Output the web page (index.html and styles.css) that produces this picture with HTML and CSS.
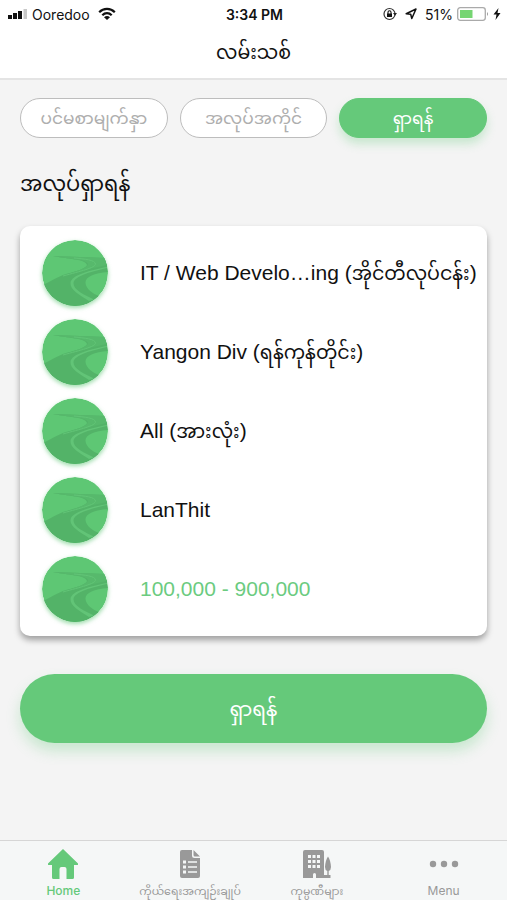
FILE: index.html
```html
<!DOCTYPE html>
<html lang="my">
<head>
<meta charset="utf-8">
<meta name="viewport" content="width=device-width, initial-scale=1">
<title>လမ်းသစ်</title>
<link rel="stylesheet" href="styles.css">
</head>
<body>
<svg class="defs" aria-hidden="true">
  <symbol id="road" viewBox="0 0 66 66">
    <circle cx="33" cy="33" r="33" fill="#5ec774"/>
    <path d="M11 16C28 17 48 17 62.500 18A33 33 0 0 1 66 32C52 33 43 37 43.500 43C44 49 51 54 57 56A33 33 0 0 1 2 44.500C9 41 14 38 21 35C31 32 44 29 45 25C44 19 25 19 11 16Z" fill="#53b368"/>
    <path d="M11 16C28 17 48 17 62.500 18L65 25C52 28 38 30 21 36C34 31 46 28 46 24C44 19 25 19 11 16Z" fill="#57b96c"/>
    <path d="M32 18C43 19 53 20 53.500 24C53 28 39 31 21 36" fill="none" stroke="#62c477" stroke-width="1"/>
    <path d="M65 27C49 30 29 35 28.500 43C28 50 38 55 47 61L52 59.500C43 55 31 50 31.500 43C32 36 51 31 65 28Z" fill="#62c477"/>
  </symbol>
</svg>
<div class="app">
  <header class="header">
    <div class="status">
      <div class="status-left">
        <svg width="20" height="12" viewBox="0 0 20 12"><path d="M0 7h4v4H0zM5 5h4v6H5zM10 3h4v8h-4zM15 1h4v10h-4z" fill="#111"/><path d="M15 0h5v12h-5z" fill="#fff"/><path d="M15.500 1h3.500v10h-3.500z" fill="#c8c8c8"/></svg>
        <span>Ooredoo</span>
        <svg class="wifi" width="18" height="14" viewBox="0 0 18 14" fill="none" stroke="#111" stroke-width="2.2"><path d="M1.2 5.2C5.5 .8 12.500 .8 16.800 5.200M4.300 8.200C7 5.500 11 5.500 13.700 8.200"/><path d="M9 13L6 10.200Q9 7.800 12 10.200Z" fill="#111" stroke="none"/></svg>
      </div>
      <time class="clock">3:34 PM</time>
      <div class="status-right">
        <svg width="14" height="14" viewBox="0 0 14 14"><circle cx="6.500" cy="7" r="5.500" fill="none" stroke="#333" stroke-width="1.200"/><path d="M10 6h4l-2 2.800z" fill="#222"/><path d="M4 6.500h5V10H4z" fill="#111"/><path d="M5 7V5.200a1.500 1.500 0 0 1 3 0V7" fill="none" stroke="#111" stroke-width="1.100"/></svg>
        <svg class="arrow" width="12" height="12" viewBox="0 0 12 12"><path d="M11 1L6.800 10.500 5.700 6.300 1.200 5.700Z" fill="none" stroke="#111" stroke-width="1.500" stroke-linejoin="round"/></svg>
        <span>51%</span>
        <svg width="32" height="14" viewBox="0 0 32 14"><rect x=".7" y=".7" width="27.600" height="12.600" rx="2.500" fill="#fff" stroke="#aaa" stroke-width="1.300"/><path d="M3 3h12.500v8H3z" fill="#76d572"/><path d="M30 5q2 2 0 4z" fill="#999"/></svg>
        <svg width="8" height="12" viewBox="0 0 8 12"><path d="M5.500 0L.5 6.500h3L2.500 12l5-7H4.500z" fill="#111"/></svg>
      </div>
    </div>
    <h1 class="title">လမ်းသစ်</h1>
  </header>
  <main class="content">
    <nav class="tabs">
      <button class="tab" type="button">ပင်မစာမျက်နှာ</button>
      <button class="tab" type="button">အလုပ်အကိုင်</button>
      <button class="tab tab-active" type="button">ရှာရန်</button>
    </nav>
    <h2 class="heading">အလုပ်ရှာရန်</h2>
    <div class="card">
      <button class="row" type="button"><svg class="badge"><use href="#road"/></svg><span>IT / Web Develo…ing (<span class="my">အိုင်တီလုပ်ငန်း</span>)</span></button>
      <button class="row" type="button"><svg class="badge"><use href="#road"/></svg><span>Yangon Div (<span class="my">ရန်ကုန်တိုင်း</span>)</span></button>
      <button class="row" type="button"><svg class="badge"><use href="#road"/></svg><span>All (<span class="my">အားလုံး</span>)</span></button>
      <button class="row" type="button"><svg class="badge"><use href="#road"/></svg><span>LanThit</span></button>
      <button class="row row-salary" type="button"><svg class="badge"><use href="#road"/></svg><span>100,000 - 900,000</span></button>
    </div>
    <button class="search" type="button">ရှာရန်</button>
  </main>
  <nav class="tabbar">
    <a class="item item-active" href="#"><svg viewBox="0 0 30 30"><path d="M15 0L30 14.500Q30.500 16 29 16H26V28.500Q26 30 24.500 30H18.500V20Q18.500 18 16.500 18H13.500Q11.500 18 11.500 20V30H5.500Q4 30 4 28.500V16H1Q-.5 16 0 14.500Z"/></svg><span>Home</span></a>
    <a class="item" href="#"><svg viewBox="0 0 30 30"><path d="M7 1H17V6.500Q17 9 19.500 9H25V27Q25 29 23 29H7Q5 29 5 27V3Q5 1 7 1ZM18.500 1L25 7.500H20Q18.500 7.500 18.500 6Z"/><path d="M8 11.500h3v3H8zM8 16.500h3v3H8zM8 21.500h3v3H8zM13 12.200h9v1.600h-9zM13 17.200h9v1.600h-9zM13 22.200h9v1.600h-9z" fill="#f5f7f7"/></svg><span class="item-my">ကိုယ်ရေးအကျဉ်းချုပ်</span></a>
    <a class="item" href="#"><svg viewBox="0 0 30 30"><path d="M3 1H20Q22 1 22 3V26H25.300V22Q23 21 23 18Q23.500 11 26 7.500Q28.500 11 29 18Q29 21 26.700 22V26H28.500V29H14V25.500Q14 24 12.500 24Q11 24 11 25.500V29H1V3Q1 1 3 1Z"/><path d="M6 6h3v3H6zM10.500 6h3v3h-3zM15 6h3v3h-3zM6 11h3v3H6zM10.500 11h3v3h-3zM15 11h3v3h-3zM6 16h3v3H6zM10.500 16h3v3h-3zM15 16h3v3h-3z" fill="#f5f7f7"/></svg><span class="item-my">ကုမ္ပဏီများ</span></a>
    <a class="item" href="#"><svg viewBox="0 0 30 30"><circle cx="4" cy="15" r="3.200"/><circle cx="15" cy="15" r="3.200"/><circle cx="26" cy="15" r="3.200"/></svg><span>Menu</span></a>
  </nav>
</div>
</body>
</html>
```
FILE: styles.css
```css
* { box-sizing: border-box; }
body {
  margin: 0;
  background: #f4f4f4;
  color: #111;
  font-family: "Liberation Sans", "Noto Sans Myanmar", Padauk, "Noto Sans", sans-serif;
}
button { font: inherit; color: inherit; cursor: pointer; }
.defs { position: absolute; width: 0; height: 0; }
.app { display: flex; flex-direction: column; min-height: 100vh; }

.header { background: #fff; border-bottom: 2px solid #e4e4e4; }
.status {
  display: grid;
  grid-template-columns: 1fr auto 1fr;
  align-items: center;
  height: 28px;
  padding: 0 6px 0 8px;
  font-family: Inter, "Liberation Sans", sans-serif;
  font-size: 14px;
}
.status-left, .status-right { display: flex; align-items: center; gap: 4px; }
.status-right { justify-content: flex-end; }
.wifi { margin-left: 4px; }
.arrow { margin: 0 4px; }
.clock { font-weight: 600; }
.title {
  margin: 0;
  height: 50px;
  font-size: 19px;
  font-weight: 400;
  line-height: 50px;
  text-align: center;
}

.content { flex: 1; display: flex; flex-direction: column; padding: 18px 20px; }
.tabs { display: grid; grid-template-columns: repeat(3, 1fr); gap: 12px; }
.tab {
  height: 40px;
  padding: 2px 0 0;
  border: 1px solid #bdbdbd;
  border-radius: 20px;
  background: #fff;
  color: #aeaeae;
  font-size: 17px;
  white-space: nowrap;
}
.tab-active {
  border-color: #65c97a;
  background: #65c97a;
  color: #fff;
  box-shadow: 0 6px 10px #65c97a4d;
}
.heading { margin: 26px 0 22px; font-size: 21px; font-weight: 400; line-height: 40px; }
.card {
  display: flex;
  flex-direction: column;
  gap: 13px;
  padding: 14px 12px 14px 22px;
  border-radius: 10px;
  background: #fff;
  box-shadow: 0 4px 6px #00000059;
}
.row {
  display: flex;
  align-items: center;
  gap: 32px;
  padding: 0;
  border: 0;
  background: none;
  font-size: 21px;
  line-height: 30px;
  text-align: left;
  white-space: nowrap;
}
.my { font-size: 19px; }
.row-salary { color: #6bcb80; }
.badge {
  flex: none;
  width: 66px;
  height: 66px;
  border-radius: 50%;
  box-shadow: 0 2px 4px #5ec77499;
}
.search {
  height: 69px;
  margin-top: 38px;
  padding: 6px 0 0;
  border: 0;
  border-radius: 35px;
  background: #65c97a;
  box-shadow: 0 8px 14px #65c97a4d;
  color: #fff;
  font-size: 20px;
}

.tabbar {
  display: grid;
  grid-template-columns: repeat(4, 1fr);
  height: 60px;
  border-top: 1px solid #d6d6d6;
  background: #f5f7f7;
}
.item {
  display: flex;
  flex-direction: column;
  align-items: center;
  gap: 4px;
  padding-top: 8px;
  color: #999;
  font-family: Inter, "Noto Sans Myanmar", Padauk, "Liberation Sans", sans-serif;
  font-size: 12px;
  line-height: 16px;
  text-decoration: none;
  white-space: nowrap;
}
.item-my { font-size: 11px; }
.item svg { width: 30px; height: 30px; fill: currentColor; }
.item-active { color: #65c97a; font-weight: 500; }
```
